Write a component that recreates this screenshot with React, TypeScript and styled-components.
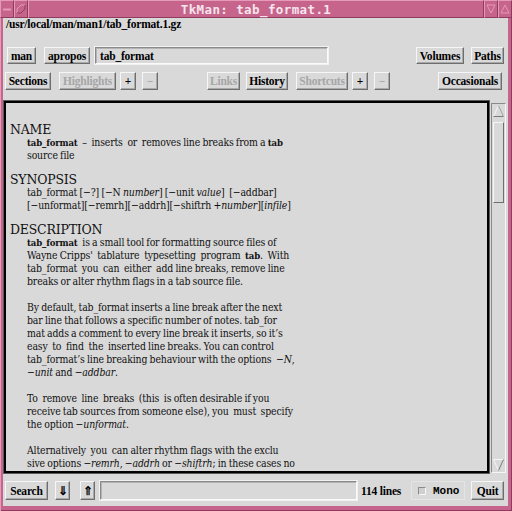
import React from 'react';
import styled, { createGlobalStyle } from 'styled-components';

const PINK = '#c6648c';
const PINK_LIGHT = '#e59ab8';
const PINK_DARK = '#8e3c5e';
const BG = '#d9d9d9';

const Global = createGlobalStyle`
  html, body { margin: 0; padding: 0; background: ${PINK}; }
  body { width: 512px; height: 511px; overflow: hidden; }
`;

const Window = styled.div`
  width: 512px;
  height: 511px;
  box-sizing: border-box;
  display: flex;
  flex-direction: column;
  background: ${PINK};
  padding: 0 4px 5px 3px;
  box-shadow: inset 1px 0 0 ${PINK_LIGHT}, inset -1px -1px 0 ${PINK_DARK};
`;

const TitleBar = styled.div`
  height: 18px;
  margin: 0 -4px 0 -3px;
  display: flex;
  align-items: stretch;
  background: ${PINK};
`;

const TitleBox = styled.div<{ $w: number }>`
  width: ${(p) => p.$w}px;
  box-sizing: border-box;
  border: 1px solid;
  border-color: ${PINK_LIGHT} ${PINK_DARK} ${PINK_DARK} ${PINK_LIGHT};
  display: flex;
  align-items: center;
  justify-content: center;
`;

const Title = styled.div`
  flex: 1;
  box-sizing: border-box;
  border: 1px solid;
  border-color: ${PINK_LIGHT} ${PINK_DARK} ${PINK_DARK} ${PINK_LIGHT};
  display: flex;
  align-items: center;
  justify-content: center;
  font: bold 12.5px 'DejaVu Sans Mono', monospace;
  color: #f6e4ec;
  letter-spacing: 0.4px;
`;

const Body = styled.div`
  flex: 1;
  background: ${BG};
  display: flex;
  flex-direction: column;
  padding-bottom: 6px;
`;

const PathLine = styled.div`
  height: 20px;
  line-height: 21px;
  padding-left: 3px;
  font: bold 11.5px 'Liberation Serif', serif;
  color: #000;
  letter-spacing: -0.2px;
`;

const Row = styled.div<{ $mt: number; $h: number; $pl: number; $pr: number }>`
  margin-top: ${(p) => p.$mt}px;
  height: ${(p) => p.$h}px;
  padding: 0 ${(p) => p.$pr}px 0 ${(p) => p.$pl}px;
  display: flex;
  align-items: stretch;
`;

const Button = styled.div<{ $w: number; $ml?: number; $off?: boolean }>`
  box-sizing: border-box;
  width: ${(p) => p.$w}px;
  margin-left: ${(p) => p.$ml ?? 0}px;
  flex: none;
  background: ${BG};
  border: 1px solid;
  border-color: #f6f6f6 #6e6e6e #6e6e6e #f6f6f6;
  box-shadow: inset -1px -1px 0 #a9a9a9;
  font: bold 11.5px 'Liberation Serif', serif;
  color: ${(p) => (p.$off ? '#a6a6a6' : '#000')};
  display: flex;
  align-items: center;
  justify-content: center;
  letter-spacing: -0.2px;
`;

const Spacer = styled.div`
  flex: 1;
`;

const Field = styled.div<{ $w: number; $ml: number }>`
  box-sizing: border-box;
  width: ${(p) => p.$w}px;
  margin-left: ${(p) => p.$ml}px;
  flex: none;
  background: ${BG};
  border: 1px solid;
  border-color: #8a8a8a #fbfbfb #fbfbfb #8a8a8a;
  box-shadow: 0 0 0 1px #f2f2f2, inset 1px 1px 0 #b4b4b4;
  font: bold 11.5px 'Liberation Serif', serif;
  display: flex;
  align-items: center;
  padding-left: 4px;
  letter-spacing: -0.2px;
`;

const Panel = styled.div`
  margin-top: 11px;
  height: 372px;
  display: flex;
  padding-left: 1px;
  gap: 2px;
`;

const TextFrame = styled.div`
  box-sizing: border-box;
  width: 485px;
  border: 2px solid #000;
  box-shadow: 0 0 0 1px #5a5a5a;
  background: ${BG};
  overflow: hidden;
  padding: 20px 0 0 4px;
  font-family: 'DejaVu Serif', serif;
  color: #111;
`;

const Heading = styled.div<{ $mt: number }>`
  margin-top: ${(p) => p.$mt}px;
  font-size: 12.5px;
  line-height: 13px;
  height: 13px;
  letter-spacing: -0.2px;
`;

const Line = styled.div<{ $gap?: boolean }>`
  margin-top: ${(p) => (p.$gap ? 13 : 0)}px;
  padding-left: 17px;
  font-size: 10.4px;
  line-height: 13px;
  height: 13px;
  white-space: pre;
  font-stretch: semi-condensed;
  letter-spacing: -0.15px;
  word-spacing: -0.5px;
`;

const B = styled.b`
  font-size: 9.5px;
  font-weight: bold;
`;

const I = styled.i`
  font-style: italic;
`;

const Scrollbar = styled.div`
  box-sizing: border-box;
  width: 15px;
  margin-top: 2px;
  height: 370px;
  border: 1px solid;
  border-color: #8a8a8a #f6f6f6 #f6f6f6 #8a8a8a;
  display: flex;
  flex-direction: column;
  align-items: center;
`;

const Arrow = styled.div`
  height: 14px;
  width: 13px;
  display: flex;
  align-items: center;
  justify-content: center;
  flex: none;
`;

const Slider = styled.div`
  box-sizing: border-box;
  margin-top: 4px;
  width: 11px;
  height: 81px;
  border: 1px solid;
  border-color: #f6f6f6 #6e6e6e #6e6e6e #f6f6f6;
  flex: none;
`;

const Label = styled.div<{ $ml: number }>`
  margin-left: ${(p) => p.$ml}px;
  font: bold 11.5px 'Liberation Serif', serif;
  display: flex;
  align-items: center;
  letter-spacing: -0.2px;
`;

const Check = styled.div<{ $w: number; $ml: number }>`
  box-sizing: border-box;
  width: ${(p) => p.$w}px;
  margin-left: ${(p) => p.$ml}px;
  border: 1px solid #e4e4e4;
  display: flex;
  align-items: center;
  gap: 7px;
  padding-left: 6px;
  font: bold 11px 'Liberation Mono', monospace;
`;

const CheckBox = styled.span`
  box-sizing: border-box;
  width: 8px;
  height: 8px;
  border: 1px solid;
  border-color: #8a8a8a #f6f6f6 #f6f6f6 #8a8a8a;
  background: #cfcfcf;
`;

const Up = () => (
  <svg width="11" height="12" viewBox="0 0 11 12">
    <polyline points="0.5,11.5 5.5,0.5 10.5,11.5" fill="none" stroke="#f6f6f6" />
    <line x1="0.5" y1="11.5" x2="10.5" y2="11.5" stroke="#7a7a7a" />
    <line x1="5.5" y1="0.5" x2="10.5" y2="11.5" stroke="#9a9a9a" />
  </svg>
);

const Down = () => (
  <svg width="11" height="12" viewBox="0 0 11 12">
    <polyline points="0.5,0.5 5.5,11.5" fill="none" stroke="#f6f6f6" />
    <line x1="0.5" y1="0.5" x2="10.5" y2="0.5" stroke="#f6f6f6" />
    <line x1="5.5" y1="11.5" x2="10.5" y2="0.5" stroke="#7a7a7a" />
  </svg>
);

const SmallIcon = ({ kind }: { kind: string }) => {
  if (kind === 'min')
    return (
      <svg width="10" height="10" viewBox="0 0 10 10">
        <line x1="1" y1="5.5" x2="9" y2="5.5" stroke={PINK_LIGHT} strokeWidth="2" />
      </svg>
    );
  if (kind === 'max')
    return (
      <svg width="10" height="10" viewBox="0 0 10 10">
        <polyline points="1,9 1,5 5,1 9,1" fill="none" stroke={PINK_LIGHT} />
        <polyline points="9,1 9,5 5,9 1,9" fill="none" stroke={PINK_DARK} />
      </svg>
    );
  if (kind === 'down')
    return (
      <svg width="10" height="10" viewBox="0 0 10 10">
        <polyline points="1,1 9,1 5,9 1,1" fill="none" stroke={PINK_LIGHT} />
      </svg>
    );
  return (
    <svg width="10" height="10" viewBox="0 0 10 10">
      <polyline points="1,9 5,1 9,9 1,9" fill="none" stroke={PINK_LIGHT} />
    </svg>
  );
};

export default function App() {
  return (
    <>
      <Global />
      <Window>
        <TitleBar>
          <TitleBox $w={14}><SmallIcon kind="min" /></TitleBox>
          <TitleBox $w={14}><SmallIcon kind="max" /></TitleBox>
          <Title>TkMan: tab_format.1</Title>
          <TitleBox $w={14}><SmallIcon kind="down" /></TitleBox>
          <TitleBox $w={14}><SmallIcon kind="up" /></TitleBox>
        </TitleBar>
        <Body>
          <PathLine>/usr/local/man/man1/tab_format.1.gz</PathLine>
          <Row $mt={9} $h={17} $pl={4} $pr={4}>
            <Button $w={29}>man</Button>
            <Button $w={46} $ml={8}>apropos</Button>
            <Field $w={233} $ml={5}>tab_format</Field>
            <Spacer />
            <Button $w={48}>Volumes</Button>
            <Button $w={33} $ml={7}>Paths</Button>
          </Row>
          <Row $mt={8} $h={18} $pl={2} $pr={6}>
            <Button $w={46}>Sections</Button>
            <Button $w={57} $ml={8} $off>Highlights</Button>
            <Button $w={16} $ml={4}>+</Button>
            <Button $w={16} $ml={6} $off>−</Button>
            <Button $w={33} $ml={49} $off>Links</Button>
            <Button $w={42} $ml={6}>History</Button>
            <Button $w={52} $ml={8} $off>Shortcuts</Button>
            <Button $w={16} $ml={4}>+</Button>
            <Button $w={16} $ml={6} $off>−</Button>
            <Spacer />
            <Button $w={64}>Occasionals</Button>
          </Row>
          <Panel>
            <TextFrame>
              <Heading $mt={0}>NAME</Heading>
              <Line><B>tab_format</B>  –  inserts  or  removes line breaks from a <B>tab</B></Line>
              <Line>source file</Line>
              <Heading $mt={11}>SYNOPSIS</Heading>
              <Line>tab_format [−?] [−N <I>number</I>] [−unit <I>value</I>]  [−addbar]</Line>
              <Line>[−unformat][−remrh][−addrh][−shiftrh +<I>number</I>][<I>infile</I>]</Line>
              <Heading $mt={11}>DESCRIPTION</Heading>
              <Line><B>tab_format</B>  is a small tool for formatting source files of</Line>
              <Line>Wayne Cripps'  tablature  typesetting  program  <B>tab</B>.  With</Line>
              <Line>tab_format  you  can  either  add line breaks, remove line</Line>
              <Line>breaks or alter rhythm flags in a tab source file.</Line>
              <Line $gap>By default, tab_format inserts a line break after the next</Line>
              <Line>bar line that follows a specific number of notes. tab_for</Line>
              <Line>mat adds a comment to every line break it inserts, so it’s</Line>
              <Line>easy  to  find  the  inserted line breaks. You can control</Line>
              <Line>tab_format’s line breaking behaviour with the options  −<I>N</I>,</Line>
              <Line>−<I>unit</I> and −<I>addbar</I>.</Line>
              <Line $gap>To  remove  line  breaks  (this  is often desirable if you</Line>
              <Line>receive tab sources from someone else), you  must  specify</Line>
              <Line>the option −<I>unformat</I>.</Line>
              <Line $gap>Alternatively  you  can alter rhythm flags with the exclu</Line>
              <Line>sive options −<I>remrh</I>, −<I>addrh</I> or −<I>shiftrh</I>; in these cases no</Line>
              <Line>line breaks are changed.</Line>
            </TextFrame>
            <Scrollbar>
              <Arrow><Up /></Arrow>
              <Slider />
              <Spacer />
              <Arrow><Down /></Arrow>
            </Scrollbar>
          </Panel>
          <Row $mt={8} $h={19} $pl={2} $pr={4}>
            <Button $w={43}>Search</Button>
            <Button $w={15} $ml={7}>⇓</Button>
            <Button $w={15} $ml={10}>⇑</Button>
            <Field $w={257} $ml={5} />
            <Label $ml={4}>114 lines</Label>
            <Spacer />
            <Check $w={54} $ml={0}><CheckBox />Mono</Check>
            <Button $w={33} $ml={6}>Quit</Button>
          </Row>
        </Body>
      </Window>
    </>
  );
}
